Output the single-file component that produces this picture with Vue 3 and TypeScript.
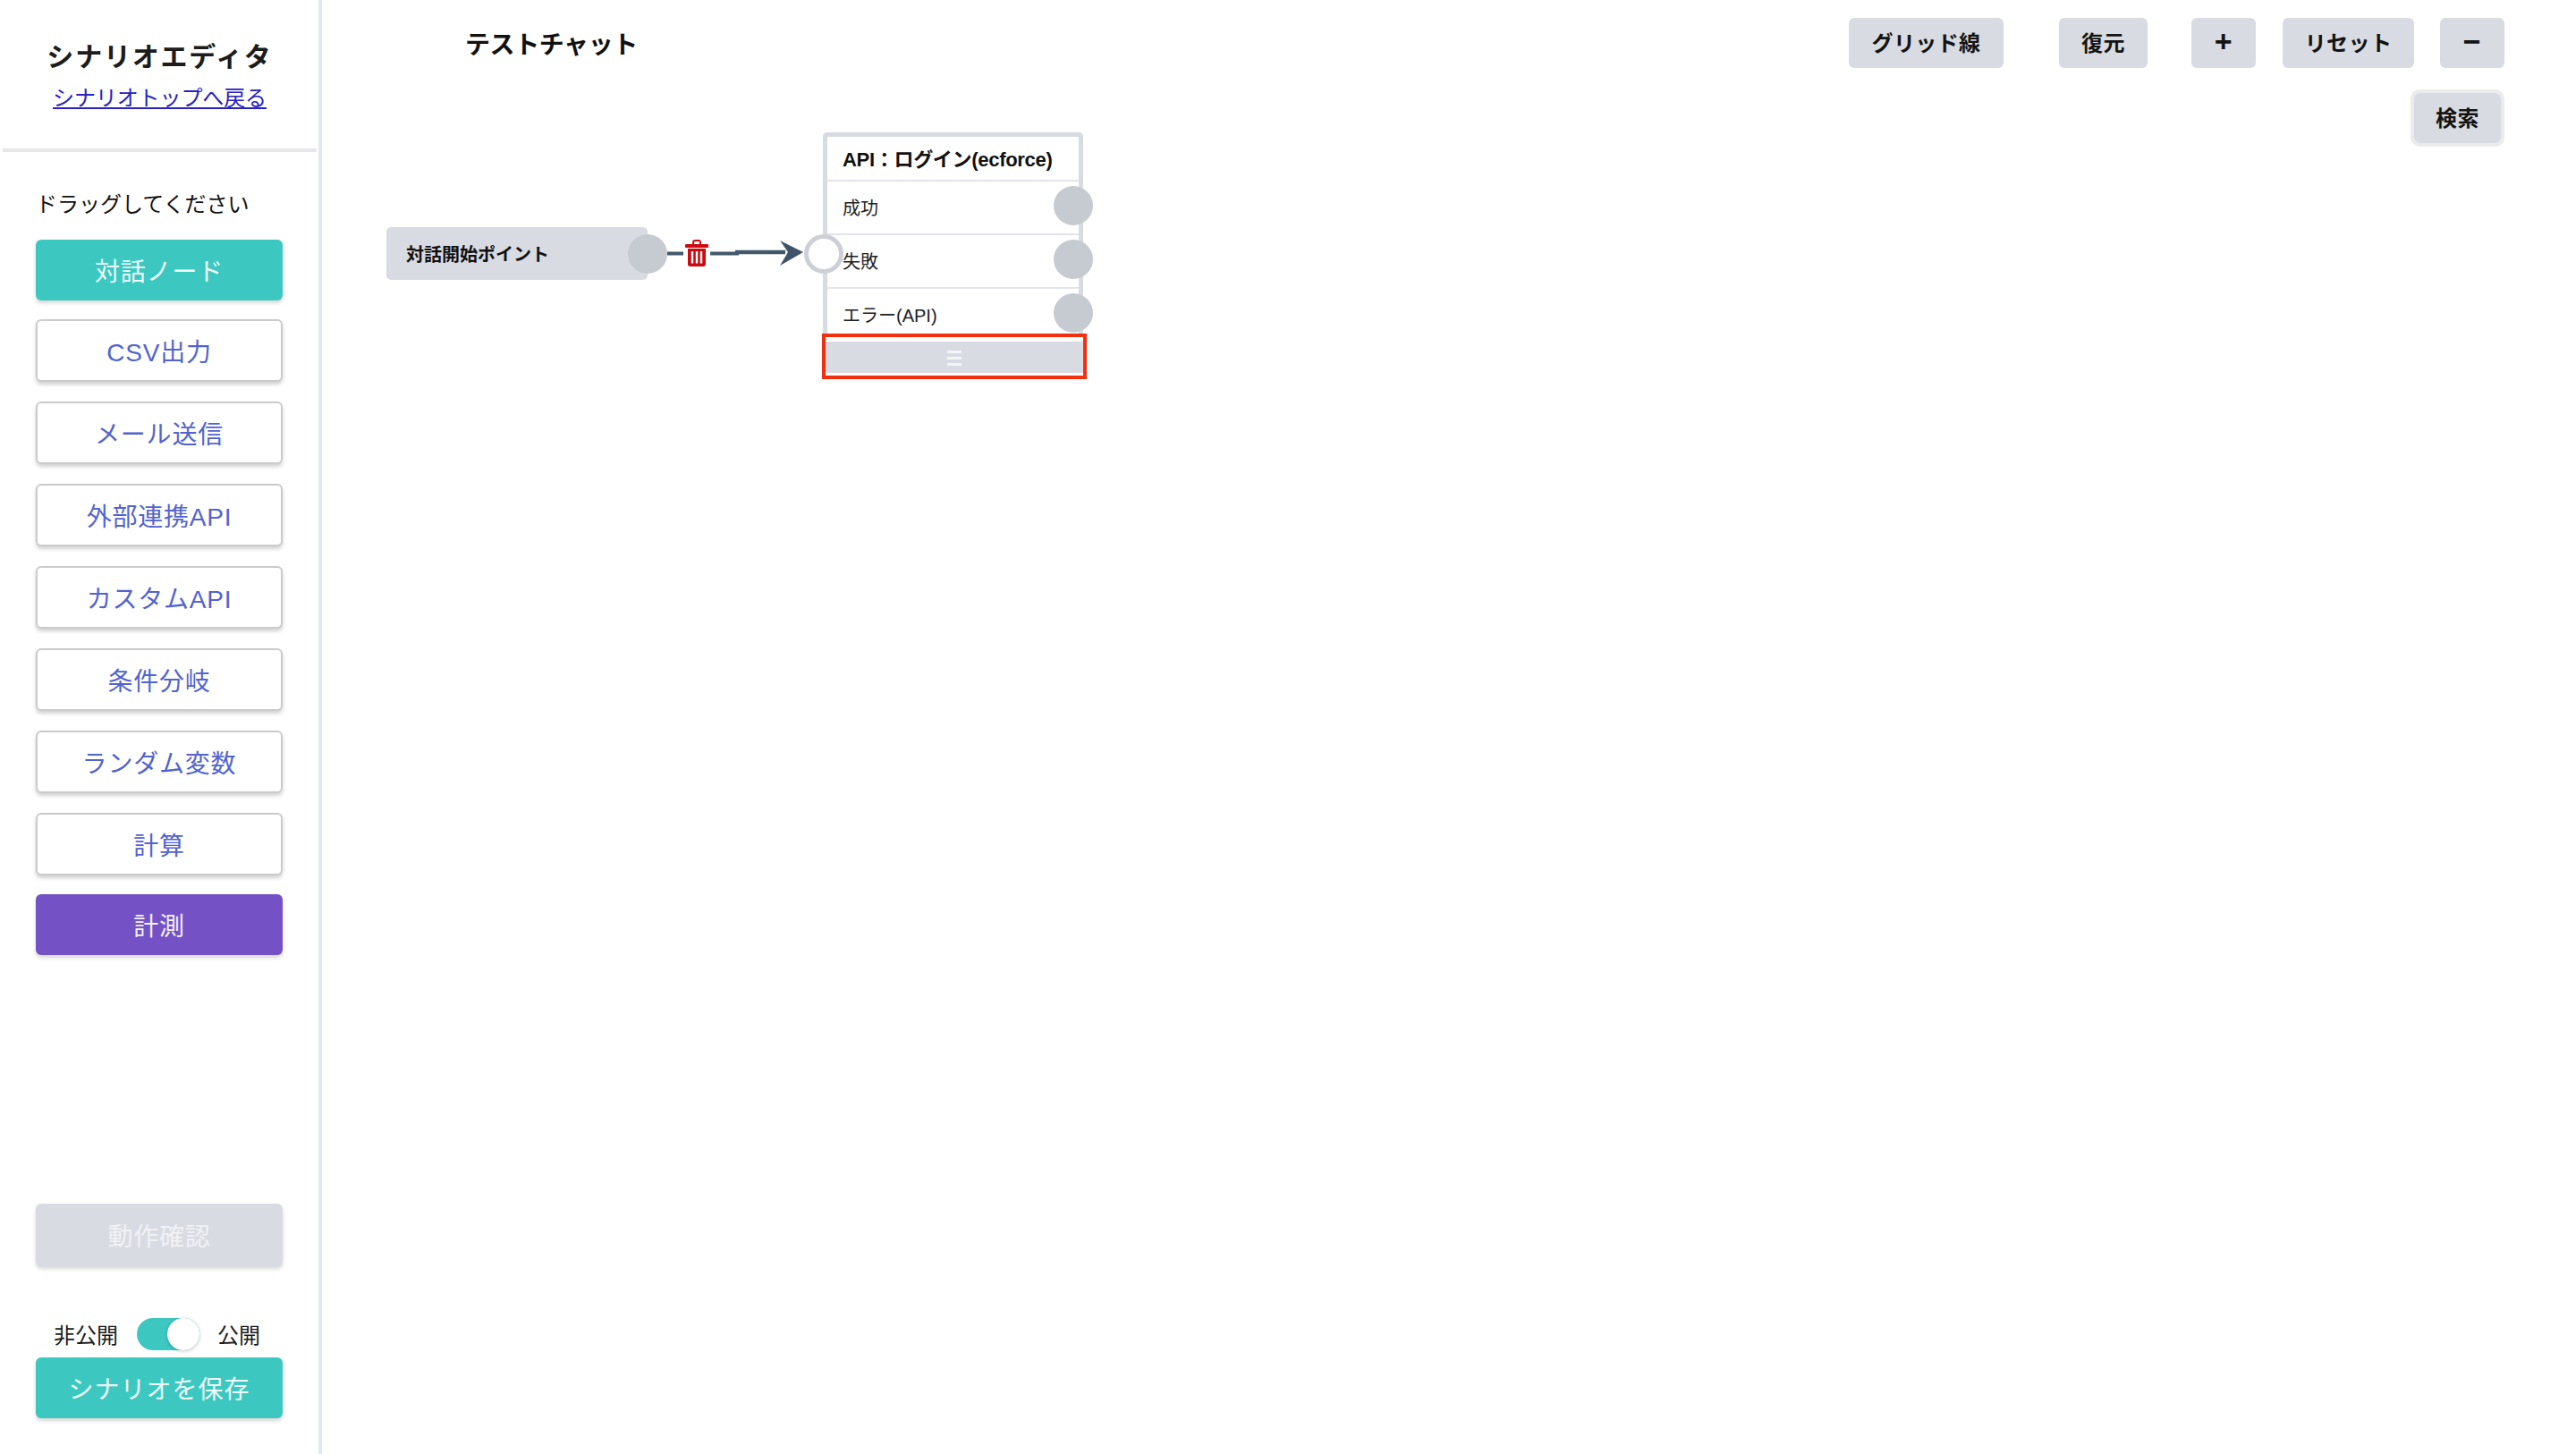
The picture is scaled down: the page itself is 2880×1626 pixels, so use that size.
<template>
  <div class="editor">
    <aside class="sidebar">
      <header class="side-head">
        <h1>シナリオエディタ</h1>
        <a href="#" class="back-link">シナリオトップへ戻る</a>
      </header>
      <div class="palette">
        <p class="hint">ドラッグしてください</p>
        <button
          v-for="item in palette"
          :key="item.label"
          class="side-btn"
          :class="item.kind"
        >{{ item.label }}</button>
      </div>
      <div class="side-foot">
        <button class="side-btn disabled">動作確認</button>
        <div class="publish">
          <span>非公開</span>
          <span class="toggle"><i></i></span>
          <span>公開</span>
        </div>
        <button class="side-btn teal save">シナリオを保存</button>
      </div>
    </aside>

    <main class="main">
      <div class="topbar">
        <h2>テストチャット</h2>
        <div class="tools">
          <button class="tool grid-btn">グリッド線</button>
          <button class="tool restore">復元</button>
          <button class="tool square plus">+</button>
          <button class="tool reset">リセット</button>
          <button class="tool square minus">−</button>
        </div>
      </div>
      <div class="search-row">
        <button class="tool search">検索</button>
      </div>

      <div class="canvas">
        <div class="start-node">
          <span>対話開始ポイント</span>
          <i class="port out start-port"></i>
        </div>

        <svg class="edge" width="170" height="50" viewBox="0 0 170 50">
          <path d="M0 24.5H18M48 24.5H80" stroke="#44586b" stroke-width="4" fill="none" />
          <path d="M76 23H132" stroke="#44586b" stroke-width="4.500" fill="none" />
          <path d="M126 10L152 23L126 38L135 23Z" fill="#3f5468" />
        </svg>

        <svg class="trash" width="26" height="30" viewBox="0 0 26 30">
          <path d="M9 5V3.2C9 1.8 10 1 11.2 1H14.8C16 1 17 1.8 17 3.2V5" stroke="#cc0a10" stroke-width="2" fill="none" />
          <rect x="0" y="5" width="26" height="4" rx="1" fill="#cc0a10" />
          <path d="M3 10H23V27.5C23 29 22 30 20.5 30H5.500C4 30 3 29 3 27.5Z" fill="#cc0a10" />
          <path d="M8 13V26.500M13 13V26.500M18 13V26.500" stroke="#fff" stroke-width="2.400" />
        </svg>

        <div class="api-node">
          <div class="node-title">API：ログイン(ecforce)</div>
          <div v-for="row in rows" :key="row" class="node-row">
            <span>{{ row }}</span>
            <i class="port out"></i>
          </div>
          <i class="port in"></i>
          <div class="handle">
            <div class="handle-bar">
              <span class="bars"><b></b><b></b><b></b></span>
            </div>
          </div>
        </div>
      </div>
    </main>
  </div>
</template>

<script setup lang="ts">
interface PaletteItem {
  label: string
  kind: string
}

const palette: PaletteItem[] = [
  { label: '対話ノード', kind: 'teal' },
  { label: 'CSV出力', kind: 'plain' },
  { label: 'メール送信', kind: 'plain' },
  { label: '外部連携API', kind: 'plain' },
  { label: 'カスタムAPI', kind: 'plain' },
  { label: '条件分岐', kind: 'plain' },
  { label: 'ランダム変数', kind: 'plain' },
  { label: '計算', kind: 'plain' },
  { label: '計測', kind: 'purple' }
]

const rows = ['成功', '失敗', 'エラー(API)']
</script>

<style>
html, body {
  background: #fff;
}
</style>

<style scoped>
.editor {
  display: flex;
  height: 1626px;
  font-family: "Liberation Sans", "Noto Sans CJK JP", sans-serif;
  color: #111;
  overflow: hidden;
}
.sidebar {
  height: 1626px;
  box-sizing: border-box;
  border-right: 4px solid #e6e7ed;
  flex: none;
  width: 360px;
  display: flex;
  flex-direction: column;
  padding-bottom: 40px;
}
.side-head {
  height: 170px;
  box-sizing: border-box;
  margin: 0 2px 0 3px;
  border-bottom: 4px solid #e6e7e9;
  text-align: center;
  padding-top: 42px;
}
.side-head h1 {
  margin: 0;
  font-size: 30px;
  line-height: 44px;
  font-weight: 700;
  letter-spacing: 1.8px;
  color: #1c1c1c;
}
.back-link {
  display: block;
  font-size: 24px;
  line-height: 36px;
  margin-top: 6px;
  color: #2a22c0;
  text-decoration: underline;
  letter-spacing: -0.1px;
}
.palette {
  padding: 41px 40px 0;
}
.hint {
  margin: 0 0 25px;
  font-size: 24px;
  line-height: 36px;
  height: 32px;
}
.side-btn {
  display: block;
  width: 276px;
  height: 68px;
  margin: 0 0 21px;
  padding: 0;
  border: none;
  border-radius: 6px;
  font-family: inherit;
  font-size: 28px;
  letter-spacing: 0.8px;
  box-shadow: 0 3px 4px rgba(0, 0, 0, 0.16);
}
.teal {
  background: #3cc8c0;
  color: #eefbfa;
}
.purple {
  background: #7451c4;
  color: #f4f0fb;
  margin-top: -1px;
}
.plain {
  height: 70px;
  margin-bottom: 22px;
  background: #fff;
  color: #5263cf;
  border: 2px solid #cbcbcd;
  box-shadow: 0 3px 4px rgba(0, 0, 0, 0.18);
}
.disabled {
  height: 70px;
  background: #d8dbe2;
  color: #f1f2f5;
  margin: 0;
}
.side-foot {
  margin-top: auto;
  padding: 0 40px;
}
.publish {
  display: flex;
  align-items: center;
  gap: 20px;
  height: 36px;
  margin: 58px 0 8px;
  padding-left: 20px;
  font-size: 24px;
  color: #1a1a1a;
}
.publish span:not(.toggle) {
  margin-top: -2px;
}
.toggle {
  position: relative;
  display: block;
  width: 70px;
  height: 36px;
  margin-left: 1px;
  border-radius: 18px;
  background: #3cc8c0;
}
.toggle i {
  position: absolute;
  right: 0;
  top: 0;
  width: 36px;
  height: 36px;
  border-radius: 50%;
  background: #fff;
  box-shadow: 0 1px 4px rgba(0, 0, 0, 0.22);
}
.save {
  margin: 0;
  letter-spacing: 1px;
}
.main {
  position: relative;
  flex: 1;
  min-width: 0;
}
.topbar {
  display: flex;
  justify-content: space-between;
  align-items: flex-start;
  padding: 20px 80px 0 160px;
}
.topbar h2 {
  margin: 3px 0 0;
  font-size: 28px;
  line-height: 56px;
  font-weight: 700;
  letter-spacing: -0.4px;
}
.tools {
  display: flex;
}
.tool {
  height: 56px;
  padding: 0 0 4px;
  border: none;
  border-radius: 6px;
  background: #d8dbe2;
  font-family: inherit;
  font-size: 24px;
  font-weight: 700;
  letter-spacing: 0.4px;
  color: #141414;
}
.grid-btn { width: 173px; margin-right: 62px; }
.restore { width: 99px; margin-right: 49px; }
.square { width: 72px; font-size: 34px; }
.plus { margin-right: 30px; }
.reset { width: 147px; margin-right: 29px; }
.search-row {
  display: flex;
  justify-content: flex-end;
  padding: 25px 84px 0 0;
}
.search {
  width: 97px;
  outline: 4px solid #ebebeb;
}
.canvas {
  position: absolute;
  inset: 0;
  pointer-events: none;
}
.start-node {
  position: absolute;
  left: 72px;
  top: 254px;
  width: 292px;
  height: 59px;
  box-sizing: border-box;
  padding-left: 22px;
  border-radius: 5px;
  background: #d8dbe2;
  font-size: 20px;
  font-weight: 700;
  line-height: 62px;
  color: #111;
}
.port {
  position: absolute;
  display: block;
  box-sizing: border-box;
  width: 44px;
  height: 44px;
  border-radius: 50%;
}
.port.out {
  right: -16px;
  top: 5px;
  background: #c6cad1;
}
.start-port {
  right: -22px !important;
  top: 8px !important;
}
.port.in {
  left: -26px;
  top: 109px;
  background: #fff;
  border: 5px solid #ccd0d6;
}
.edge {
  position: absolute;
  left: 386px;
  top: 259px;
}
.trash {
  position: absolute;
  left: 406px;
  top: 268px;
}
.api-node {
  position: absolute;
  left: 560px;
  top: 148px;
  width: 291px;
  height: 226px;
  box-sizing: border-box;
  border: 5px solid #d8dbe2;
  border-bottom: none;
  border-radius: 5px 5px 0 0;
  background: #fff;
}
.node-title {
  height: 48px;
  padding-left: 17px;
  border-bottom: 2px solid #e2e4e9;
  font-size: 22px;
  font-weight: 700;
  letter-spacing: -0.3px;
  line-height: 52px;
  color: #111;
}
.node-row {
  position: relative;
  height: 58px;
  padding-left: 17px;
  border-bottom: 2px solid #e2e4e9;
  font-size: 20px;
  line-height: 61px;
  color: #222;
}
.node-row:last-of-type {
  border-bottom: none;
}
.handle {
  position: absolute;
  left: -6px;
  right: -9px;
  top: 220px;
  height: 51px;
  box-sizing: border-box;
  border: 4px solid #f0300f;
  background: #fff;
  padding: 5px 0 3px;
}
.handle-bar {
  display: flex;
  align-items: center;
  justify-content: center;
  height: 100%;
  padding-top: 2px;
  box-sizing: border-box;
  background: #d8dbe2;
}
.bars {
  display: flex;
  flex-direction: column;
  gap: 4px;
}
.bars b {
  display: block;
  width: 16px;
  height: 3px;
  background: #f4f5f7;
}
</style>
